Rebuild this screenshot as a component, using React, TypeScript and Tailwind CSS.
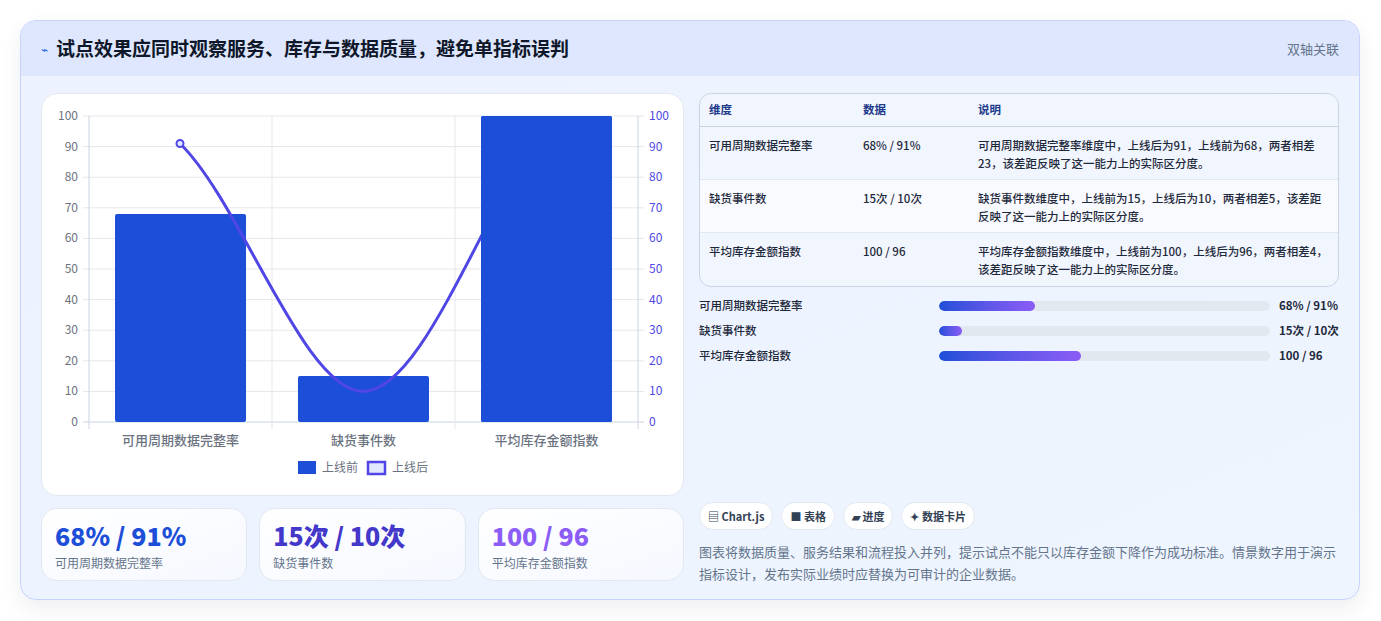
const font = { fontFamily: '"Noto Sans CJK SC", "Noto Sans", sans-serif' };

const rows = [
  { name: "可用周期数据完整率", data: "68% / 91%", desc: "可用周期数据完整率维度中，上线后为91，上线前为68，两者相差23，该差距反映了这一能力上的实际区分度。" },
  { name: "缺货事件数", data: "15次 / 10次", desc: "缺货事件数维度中，上线前为15，上线后为10，两者相差5，该差距反映了这一能力上的实际区分度。" },
  { name: "平均库存金额指数", data: "100 / 96", desc: "平均库存金额指数维度中，上线前为100，上线后为96，两者相差4，该差距反映了这一能力上的实际区分度。" },
];

const progress = [
  { name: "可用周期数据完整率", pct: 29, val: "68% / 91%" },
  { name: "缺货事件数", pct: 7, val: "15次 / 10次" },
  { name: "平均库存金额指数", pct: 43, val: "100 / 96" },
];

function Chart() {
  const x0 = 47, x1 = 596, y0 = 22, y1 = 328;
  const ys = (v: number) => y1 - (v * (y1 - y0)) / 100;
  const ticks = [0, 10, 20, 30, 40, 50, 60, 70, 80, 90, 100];
  const bars = [68, 15, 100];
  const cats = ["可用周期数据完整率", "缺货事件数", "平均库存金额指数"];
  const cw = (x1 - x0) / 3;
  return (
    <svg width="643" height="400" style={font}>
      {ticks.map((t) => (
        <g key={t}>
          <line x1={x0 - 6} x2={x1 + 6} y1={ys(t)} y2={ys(t)} stroke={t === 0 ? "#cbd5e1" : "#e5e7eb"} />
          <text x={x0 - 11} y={ys(t) + 4} textAnchor="end" fontSize="12" fill="#6b7280">{t}</text>
          <text x={x1 + 11} y={ys(t) + 4} fontSize="12" fill="#4f46e5">{t}</text>
        </g>
      ))}
      {[0, 1, 2, 3].map((i) => (
        <line key={i} x1={x0 + i * cw} x2={x0 + i * cw} y1={y0} y2={y1 + 7} stroke={i === 0 || i === 3 ? "#cbd5e1" : "#e5e7eb"} />
      ))}
      {bars.map((b, i) => (
        <rect key={i} x={x0 + i * cw + 26} y={ys(b)} width={131} height={y1 - ys(b)} rx="2" fill="#1d4ed8" />
      ))}
      <path d={`M138,${ys(91)} C200,110 262,${ys(10)} 321,${ys(10)} C382,${ys(10)} 442,110 504,${ys(96)}`} fill="none" stroke="#5046e5" strokeWidth="3" />
      <rect x={x0 + 2 * cw + 26} y={ys(100)} width={131} height={y1 - ys(100)} rx="2" fill="#1d4ed8" />
      <circle cx="138" cy={ys(91)} r="3.5" fill="#e0e7ff" stroke="#5046e5" strokeWidth="2" />
      {cats.map((c, i) => (
        <text key={c} x={x0 + i * cw + cw / 2} y="351" textAnchor="middle" fontSize="13" fill="#6b7280" fontWeight="500">{c}</text>
      ))}
      <rect x="256" y="367" width="18" height="13" fill="#1d4ed8" />
      <text x="280" y="378" fontSize="12" fill="#6b7280">上线前</text>
      <rect x="326" y="368" width="17" height="12" fill="#e0e7ff" stroke="#5046e5" strokeWidth="2.5" />
      <text x="350" y="378" fontSize="12" fill="#6b7280">上线后</text>
    </svg>
  );
}

export default function App() {
  return (
    <div className="w-[1381px] h-[621px] bg-white p-5" style={font}>
      <div className="h-[580px] w-[1340px] rounded-2xl border border-[#c7d2fe] bg-gradient-to-br from-[#edf2fe] to-[#eef5ff] overflow-hidden shadow-[0_8px_20px_rgba(30,41,59,0.08)]">
        <div className="h-[55px] bg-[#dee7fd] flex items-center justify-between px-5">
          <div className="flex items-center gap-2">
            <span className="text-[#2563eb] text-[12px]">⌁</span>
            <h1 className="text-[19px] font-bold text-[#0f172a]">试点效果应同时观察服务、库存与数据质量，避免单指标误判</h1>
          </div>
          <span className="text-[13px] text-[#64748b]">双轴关联</span>
        </div>
        <div className="flex gap-[15px] px-5 pt-[17px]">
          <div className="w-[643px] flex flex-col gap-3">
            <div className="h-[403px] bg-white rounded-2xl border border-[#e2e8f0]">
              <Chart />
            </div>
            <div className="grid grid-cols-3 gap-3">
              {[
                ["68% / 91%", "可用周期数据完整率", "text-[#1d4ed8]"],
                ["15次 / 10次", "缺货事件数", "text-[#4338ca]"],
                ["100 / 96", "平均库存金额指数", "text-[#8b5cf6]"],
              ].map(([v, l, c]) => (
                <div key={l} className="h-[73px] rounded-2xl bg-gradient-to-br from-white to-[#f5f8ff] border border-[#e2e8f0] px-[13px] pt-[11px]">
                  <div className={`text-[25px] font-extrabold leading-[30px] ${c}`}>{v}</div>
                  <div className="text-[12px] text-[#64748b] mt-[4px]">{l}</div>
                </div>
              ))}
            </div>
          </div>
          <div className="w-[642px] flex flex-col">
            <div className="rounded-xl border border-[#cbd5e1] bg-[#f1f5fe] overflow-hidden text-[11.5px] text-[#1e293b] font-medium">
              <div className="flex h-[33px] items-center px-[9px] border-b border-[#cbd5e1] text-[#1e3a8a] font-bold">
                <div className="w-[154px]">维度</div><div className="w-[115px]">数据</div><div>说明</div>
              </div>
              {rows.map((r, i) => (
                <div key={r.name} className={`flex px-[9px] py-[9px] h-[53px] ${i < 2 ? "border-b border-[#e2e8f0]" : ""} ${i === 1 ? "bg-[#f8faff]" : ""}`}>
                  <div className="w-[154px] leading-[18px]">{r.name}</div>
                  <div className="w-[115px] leading-[18px]">{r.data}</div>
                  <div className="flex-1 leading-[18px]">{r.desc}</div>
                </div>
              ))}
            </div>
            <div className="flex flex-col gap-[7px] mt-[10px]">
              {progress.map((p) => (
                <div key={p.name} className="flex items-center h-[18px] text-[11.5px] font-medium text-[#1e293b]">
                  <div className="w-[240px]">{p.name}</div>
                  <div className="w-[331px] h-[10px] rounded-full bg-[#e2e8f0] overflow-hidden">
                    <div className="h-full rounded-full bg-gradient-to-r from-[#1d4ed8] to-[#8b5cf6]" style={{ width: `${p.pct}%` }} />
                  </div>
                  <div className="ml-[9px] font-bold">{p.val}</div>
                </div>
              ))}
            </div>
            <div className="flex gap-[8px] mt-[137px]">
              {["▤ Chart.js", "■ 表格", "▰ 进度", "✦ 数据卡片"].map((c) => (
                <span key={c} className="h-[28px] px-[8px] flex items-center rounded-full bg-white border border-[#e2e8f0] text-[11px] font-semibold text-[#334155]">{c}</span>
              ))}
            </div>
            <p className="mt-[11px] text-[13px] leading-[22px] text-[#64748b]">图表将数据质量、服务结果和流程投入并列，提示试点不能只以库存金额下降作为成功标准。情景数字用于演示指标设计，发布实际业绩时应替换为可审计的企业数据。</p>
          </div>
        </div>
      </div>
    </div>
  );
}
